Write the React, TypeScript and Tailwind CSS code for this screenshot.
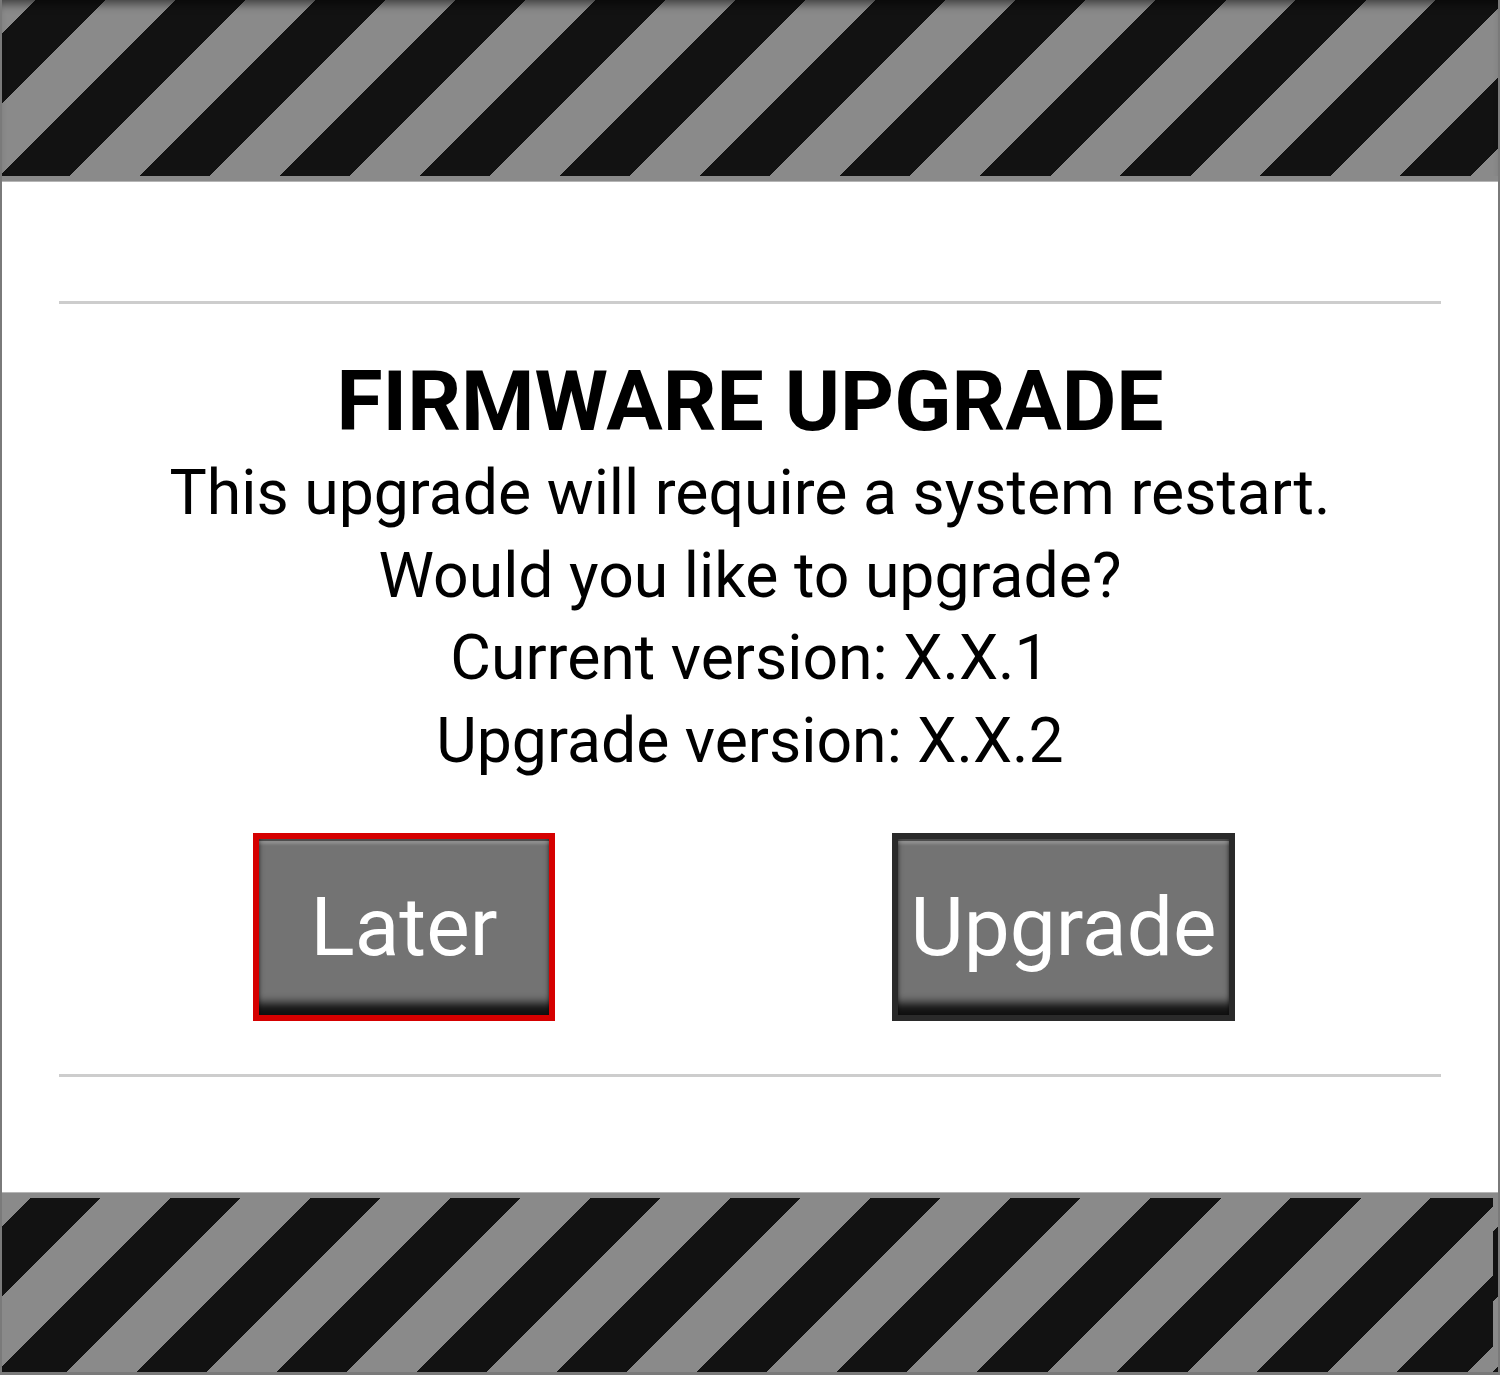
export default function App() {
  const stripes =
    "bg-[repeating-linear-gradient(135deg,#8a8a8a_0px,#8a8a8a_23.5px,#121212_23.5px,#121212_73.5px,#8a8a8a_73.5px,#8a8a8a_99px)]";

  const bevel =
    "h-full w-full flex items-center justify-center bg-[#737373] text-white text-[82px] shadow-[inset_0_-16px_10px_-4px_rgba(0,0,0,0.85),inset_0_2px_0_0_rgba(0,0,0,0.45),inset_0_7px_3px_-2px_rgba(255,255,255,0.2),inset_2px_0_3px_-1px_rgba(0,0,0,0.3),inset_-2px_0_3px_-1px_rgba(0,0,0,0.3)]";

  return (
    <div className="w-[1500px] h-[1375px] flex flex-col bg-white border-x-2 border-b-[3px] border-[#7a7a7a] font-['Roboto',sans-serif] overflow-hidden">
      {/* top hazard band */}
      <div className="h-[182px] shrink-0 bg-[#8a8a8a] pb-[5px] border-b border-[#b5b5b5]">
        <div className={`h-[176px] ${stripes} shadow-[inset_0_10px_10px_-6px_rgba(0,0,0,0.55)]`} />
      </div>

      <div className="flex-1 flex flex-col items-stretch">
        <div className="h-[119px] shrink-0" />
        <div className="mx-[57px] h-[3px] bg-[#cdcdcd]" />

        <div className="mt-[48px] flex flex-col items-center text-black">
          <h1 className="text-[84px] leading-[100px] font-bold">FIRMWARE UPGRADE</h1>
          <div className="flex flex-col items-center text-[62.5px] leading-[82.5px]">
            <p>This upgrade will require a system restart.</p>
            <p>Would you like to upgrade?</p>
            <p>Current version: X.X.1</p>
            <p>Upgrade version: X.X.2</p>
          </div>
        </div>

        <div className="mt-[51px] flex ml-[251px] gap-[337px]">
          <button className="w-[302px] h-[188px] border-[6px] border-[#d50000] bg-[#d50000]">
            <span className={bevel}>Later</span>
          </button>
          <button className="w-[343px] h-[188px] border-[6px] border-[#2a2a2a] bg-[#2a2a2a]">
            <span className={bevel}>Upgrade</span>
          </button>
        </div>

        <div className="mt-[53px] mx-[57px] h-[3px] bg-[#cdcdcd]" />
      </div>

      {/* bottom hazard band */}
      <div className="h-[180px] shrink-0 bg-[#8a8a8a] pt-[5px] border-t border-[#b5b5b5]">
        <div className={`h-[174px] ${stripes} bg-[position:-5px_0px]`} />
      </div>
    </div>
  );
}
